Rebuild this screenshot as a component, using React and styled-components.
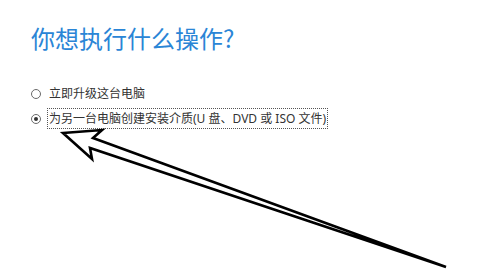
import React from 'react';
import styled, { createGlobalStyle } from 'styled-components';

const GlobalStyle = createGlobalStyle`
  html, body {
    margin: 0;
    padding: 0;
    background: #ffffff;
  }
  body {
    font-family: 'Noto Sans', 'Noto Sans CJK SC', sans-serif;
  }
`;

const Page = styled.div`
  position: relative;
  width: 493px;
  height: 277px;
  overflow: hidden;
  background: #fff;
  padding: 22px 0 0 31px;
  box-sizing: border-box;
`;

const Title = styled.h1`
  margin: 0;
  font-family: 'Noto Sans CJK SC', sans-serif;
  font-weight: 400;
  font-size: 24px;
  line-height: 32px;
  color: #2a85d6;
`;

const Options = styled.div`
  display: flex;
  flex-direction: column;
  gap: 4px;
  margin-top: 29px;
`;

const Option = styled.label`
  display: flex;
  align-items: center;
  gap: 6px;
  height: 21px;
`;

const Radio = styled.span`
  width: 8px;
  height: 8px;
  border: 1px solid #6a6a6a;
  border-radius: 50%;
  display: flex;
  align-items: center;
  justify-content: center;
  flex-shrink: 0;
  &::after {
    content: '';
    width: 4px;
    height: 4px;
    border-radius: 50%;
    background: ${p => (p.$checked ? '#333' : 'transparent')};
  }
`;

const Label = styled.span`
  font-family: 'Noto Sans', 'Noto Sans CJK SC', sans-serif;
  font-size: 12px;
  color: #333;
  line-height: 19px;
  padding: 0 1px;
  border: 1px dotted ${p => (p.$focused ? '#555' : 'transparent')};
  white-space: nowrap;
`;

const Arrow = styled.svg`
  position: absolute;
  left: 0;
  top: 0;
  pointer-events: none;
`;

export default function App() {
  return (
    <>
      <GlobalStyle />
      <Page>
        <Title>你想执行什么操作?</Title>
        <Options>
          <Option>
            <Radio />
            <Label>立即升级这台电脑</Label>
          </Option>
          <Option>
            <Radio $checked />
            <Label $focused>为另一台电脑创建安装介质(U 盘、DVD 或 ISO 文件)</Label>
          </Option>
        </Options>
        <Arrow width="493" height="277" viewBox="0 0 493 277">
          <polygon
            points="63,133 102,130 93,138 446,267 90,148 92,159"
            fill="#fff"
            stroke="#000"
            strokeWidth="2.6"
            strokeLinejoin="miter"
          />
        </Arrow>
      </Page>
    </>
  );
}
